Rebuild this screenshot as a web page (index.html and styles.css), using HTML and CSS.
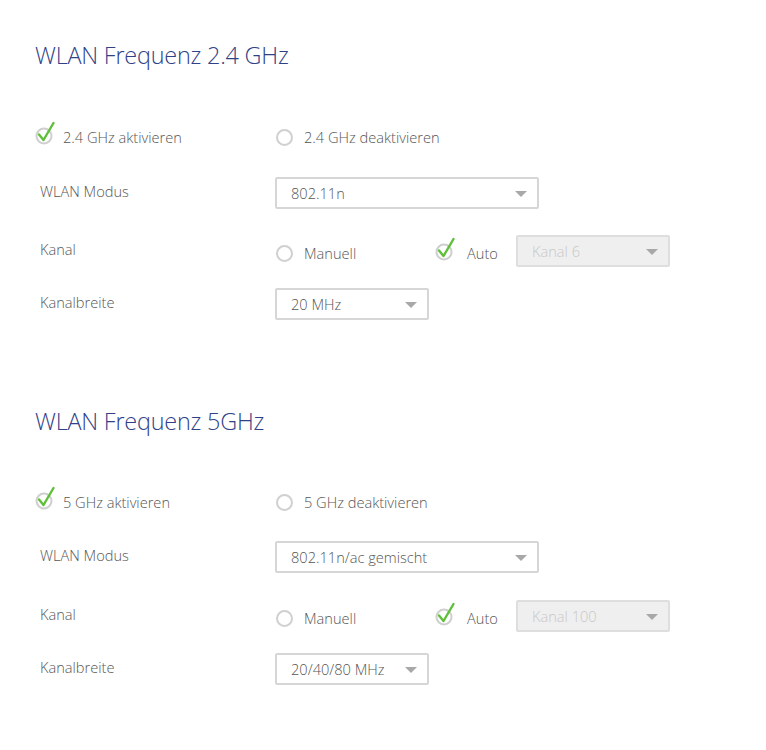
FILE: index.html
```html
<!DOCTYPE html>
<html lang="de">
<head>
<meta charset="utf-8">
<link rel="stylesheet" href="styles.css">
</head>
<body>
<div class="page">
  <section class="section">
    <h2 class="title">WLAN Frequenz 2.4 GHz</h2>
    <div class="row row-radio">
      <label class="opt"><span class="check"><svg viewBox="0 0 22 24" width="22" height="24"><circle cx="9" cy="15" r="7.5" fill="none" stroke="#cfcfcf" stroke-width="2"/><path d="M4 13.5 L8.5 19 L18.5 2" fill="none" stroke="#5fbf3a" stroke-width="2.4" stroke-linecap="round" stroke-linejoin="round"/></svg></span>2.4 GHz aktivieren</label>
      <label class="opt"><span class="radio"></span>2.4 GHz deaktivieren</label>
    </div>
    <div class="row row-modus">
      <div class="label">WLAN Modus</div>
      <div class="select wide"><span>802.11n</span><i class="arrow"></i></div>
    </div>
    <div class="row row-kanal">
      <div class="label">Kanal</div>
      <div class="controls">
        <label class="opt manual"><span class="radio"></span>Manuell</label>
        <label class="opt auto"><span class="check"><svg viewBox="0 0 22 24" width="22" height="24"><circle cx="9" cy="15" r="7.5" fill="none" stroke="#cfcfcf" stroke-width="2"/><path d="M4 13.5 L8.5 19 L18.5 2" fill="none" stroke="#5fbf3a" stroke-width="2.4" stroke-linecap="round" stroke-linejoin="round"/></svg></span>Auto</label>
        <div class="select disabled"><span>Kanal 6</span><i class="arrow"></i></div>
      </div>
    </div>
    <div class="row row-breite">
      <div class="label">Kanalbreite</div>
      <div class="select narrow"><span>20 MHz</span><i class="arrow"></i></div>
    </div>
  </section>

  <section class="section second">
    <h2 class="title">WLAN Frequenz 5GHz</h2>
    <div class="row row-radio">
      <label class="opt"><span class="check"><svg viewBox="0 0 22 24" width="22" height="24"><circle cx="9" cy="15" r="7.5" fill="none" stroke="#cfcfcf" stroke-width="2"/><path d="M4 13.5 L8.5 19 L18.5 2" fill="none" stroke="#5fbf3a" stroke-width="2.4" stroke-linecap="round" stroke-linejoin="round"/></svg></span>5 GHz aktivieren</label>
      <label class="opt"><span class="radio"></span>5 GHz deaktivieren</label>
    </div>
    <div class="row row-modus">
      <div class="label">WLAN Modus</div>
      <div class="select wide"><span>802.11n/ac gemischt</span><i class="arrow"></i></div>
    </div>
    <div class="row row-kanal">
      <div class="label">Kanal</div>
      <div class="controls">
        <label class="opt manual"><span class="radio"></span>Manuell</label>
        <label class="opt auto"><span class="check"><svg viewBox="0 0 22 24" width="22" height="24"><circle cx="9" cy="15" r="7.5" fill="none" stroke="#cfcfcf" stroke-width="2"/><path d="M4 13.5 L8.5 19 L18.5 2" fill="none" stroke="#5fbf3a" stroke-width="2.4" stroke-linecap="round" stroke-linejoin="round"/></svg></span>Auto</label>
        <div class="select disabled"><span>Kanal 100</span><i class="arrow"></i></div>
      </div>
    </div>
    <div class="row row-breite">
      <div class="label">Kanalbreite</div>
      <div class="select narrow"><span>20/40/80 MHz</span><i class="arrow"></i></div>
    </div>
  </section>
</div>
</body>
</html>
```

FILE: styles.css
```css
* { box-sizing: border-box; }
html, body { margin: 0; padding: 0; background: #fff; }
body {
  font-family: "Open Sans", "Liberation Sans", sans-serif;
  font-weight: 300;
  color: #555;
  font-size: 14.6px;
}
.page { padding: 39px 0 0 35px; width: 766px; }
.section.second { margin-top: 85px; }
.title {
  margin: 0;
  font-size: 23.4px;
  line-height: 32px;
  font-weight: 300;
  color: #2f4187;
  letter-spacing: -0.2px;
}
.row {
  display: grid;
  grid-template-columns: 240px 1fr;
  align-items: center;
  height: 32px;
}
.row-radio { margin-top: 50px; }
.row-modus { margin-top: 24px; }
.row-kanal { margin-top: 26px; }
.row-breite { margin-top: 21px; }
.second .row-radio { margin-top: 49px; }
.second .row-modus { margin-top: 23px; }
.second .row-kanal { margin-top: 27px; }
.label { padding-left: 5px; margin-top: -4px; color: #555; }
.opt { display: flex; align-items: center; color: #555; white-space: nowrap; }
.check { width: 22px; height: 24px; margin-right: 6px; margin-top: -8px; display: block; }
.check svg { display: block; }
.radio {
  width: 17px; height: 17px;
  border: 2px solid #d0d0d0;
  border-radius: 50%;
  margin-left: 1px;
  margin-right: 11px;
  display: block;
}
.controls { display: flex; align-items: center; }
.manual { width: 160px; margin-top: 4px; }
.auto { width: 81px; margin-top: 4px; }
.auto .check { margin-right: 10px; }
.select {
  position: relative;
  height: 32px;
  border: 2px solid #d6d6d6;
  border-radius: 2px;
  display: flex;
  align-items: center;
  padding-left: 14px;
  color: #555;
  background: #fff;
}
.select.wide { width: 264px; }
.select.narrow { width: 154px; }
.select.disabled { width: 154px; background: #efefef; color: #c8c8c8; border-color: #dedede; }
.arrow {
  position: absolute;
  right: 10px;
  top: 12px;
  width: 0; height: 0;
  border-left: 6px solid transparent;
  border-right: 6px solid transparent;
  border-top: 6px solid #a8a8a8;
}
```
